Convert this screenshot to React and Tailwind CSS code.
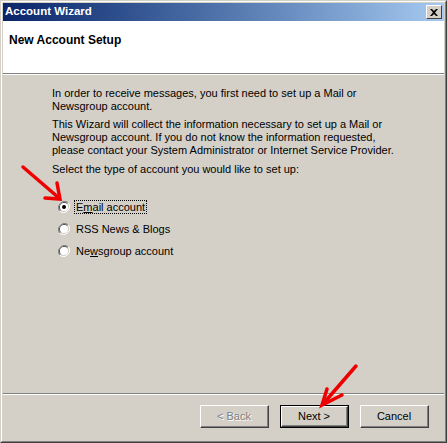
import React from 'react';

const font = { fontFamily: '"Liberation Sans", Arial, sans-serif' };

function Radio({ checked }) {
  return (
    <svg width="12" height="12" viewBox="0 0 12 12" className="shrink-0">
      <path d="M10.2 1.8 A6 6 0 0 0 1.8 10.2" fill="none" stroke="#808080" strokeWidth="1" />
      <path d="M1.8 10.2 A6 6 0 0 0 10.2 1.8" fill="none" stroke="#ffffff" strokeWidth="1" />
      <path d="M9.5 2.5 A5 5 0 0 0 2.5 9.5" fill="none" stroke="#404040" strokeWidth="1" />
      <path d="M2.5 9.5 A5 5 0 0 0 9.5 2.5" fill="none" stroke="#d4d0c8" strokeWidth="1" />
      <circle cx="6" cy="6" r="4" fill="#ffffff" />
      {checked && <circle cx="6" cy="6" r="2" fill="#000000" />}
    </svg>
  );
}

function Button({ children, disabled, isDefault }) {
  return (
    <div
      className={
        'w-[69px] h-[23px] flex items-center justify-center text-[11px] ' +
        (isDefault ? 'border border-black' : '')
      }
    >
      <div className="w-full h-full border-t border-l border-white border-r border-b border-r-[#404040] border-b-[#404040] flex">
        <div className="flex-1 flex items-center justify-center border-r border-b border-[#808080]">
          {disabled ? (
            <span className="text-[#808080] [text-shadow:1px_1px_0_#ffffff]">{children}</span>
          ) : (
            <span className="text-black">{children}</span>
          )}
        </div>
      </div>
    </div>
  );
}

export default function App() {
  return (
    <div style={font} className="relative w-[447px] h-[443px] bg-[#d4d0c8] overflow-hidden">
      <div className="w-full h-full border border-t-[#d4d0c8] border-l-[#d4d0c8] border-r-[#404040] border-b-[#404040]">
        <div className="w-full h-full border border-t-white border-l-white border-r-[#808080] border-b-[#808080] p-px flex flex-col">
          {/* title bar */}
          <div className="h-[18px] shrink-0 flex items-center justify-between pl-[2px] pr-[2px] bg-gradient-to-r from-[#0a246a] to-[#a6caf0]">
            <span className="text-white text-[11.5px] font-bold leading-none">Account Wizard</span>
            <div className="w-[16px] h-[14px] bg-[#d4d0c8] border-t border-l border-white border-r border-b border-r-[#404040] border-b-[#404040] flex items-center justify-center">
              <svg width="8" height="7" viewBox="0 0 8 7">
                <path d="M0 0 L2 0 L4 2 L6 0 L8 0 L5 3.5 L8 7 L6 7 L4 5 L2 7 L0 7 L3 3.5 Z" fill="#000" />
              </svg>
            </div>
          </div>

          {/* header */}
          <div className="h-[52px] shrink-0 bg-white pl-[6px] pt-[13px]">
            <div className="text-[12px] font-bold text-black leading-none">New Account Setup</div>
          </div>
          <div className="h-px bg-[#808080] shrink-0" />
          <div className="h-px bg-white shrink-0" />

          {/* body */}
          <div className="flex-1 pl-[49px] pt-[12px] text-[11px] text-black leading-[13px]">
            <p>
              In order to receive messages, you first need to set up a Mail or
              <br />
              Newsgroup account.
            </p>
            <p className="mt-[5px]">
              This Wizard will collect the information necessary to set up a Mail or
              <br />
              Newsgroup account. If you do not know the information requested,
              <br />
              please contact your System Administrator or Internet Service Provider.
            </p>
            <p className="mt-[6px]">Select the type of account you would like to set up:</p>

            <div className="mt-[24px] ml-[6px] flex flex-col gap-[8px]">
              <div className="flex items-center gap-[4px] h-[14px]">
                <Radio checked />
                <span className="border border-dotted border-black px-px leading-[12px]">
                  E<span className="underline">m</span>ail account
                </span>
              </div>
              <div className="flex items-center gap-[5px] h-[14px]">
                <Radio />
                <span className="px-px">RSS News &amp; Blogs</span>
              </div>
              <div className="flex items-center gap-[5px] h-[14px]">
                <Radio />
                <span className="px-px">
                  Ne<span className="underline">w</span>sgroup account
                </span>
              </div>
            </div>
          </div>

          {/* footer */}
          <div className="h-px bg-[#808080] shrink-0" />
          <div className="h-px bg-white shrink-0" />
          <div className="h-[45px] shrink-0 flex items-start justify-end gap-[11px] pt-[10px] pr-[15px]">
            <Button disabled>&lt; Back</Button>
            <Button isDefault>Next &gt;</Button>
            <Button>Cancel</Button>
          </div>
        </div>
      </div>

      {/* red annotation arrows */}
      <svg className="absolute left-0 top-0 pointer-events-none" width="447" height="443">
        <g stroke="#ee0000" strokeWidth="3.5" strokeLinecap="round" fill="none">
          <path d="M23 167 L59 198" />
          <path d="M57 183 L60 199 L45 198" />
          <path d="M356 366 L323 404" />
          <path d="M327 389 L322 405 L342 395" />
        </g>
      </svg>
    </div>
  );
}
